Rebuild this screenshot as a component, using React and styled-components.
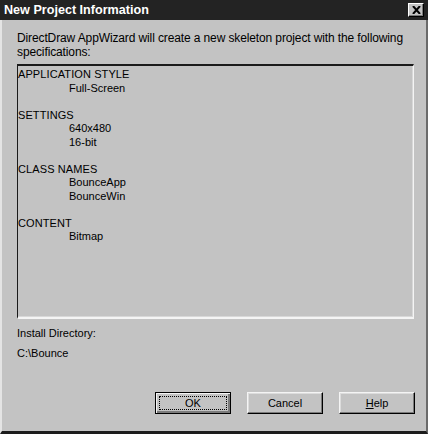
import React from 'react';
import styled, { createGlobalStyle } from 'styled-components';

const GlobalStyle = createGlobalStyle`
  html, body {
    margin: 0;
    padding: 0;
    background: #c3c3c3;
  }
  * {
    box-sizing: border-box;
  }
`;

const Window = styled.div`
  width: 428px;
  height: 434px;
  display: flex;
  flex-direction: column;
  background: #c3c3c3;
  border-left: 2px solid #e4e4e4;
  border-right: 2px solid #6a6a6a;
  border-bottom: 3px solid #1c1c1c;
  font-family: 'Liberation Sans', Arial, sans-serif;
  font-size: 11px;
  color: #000;
`;

const TitleBar = styled.div`
  height: 20px;
  flex: none;
  display: flex;
  align-items: center;
  justify-content: space-between;
  margin-left: -2px;
  margin-right: -2px;
  padding: 0 4px 0 4px;
  background: #232323;
  color: #fff;
  font-weight: bold;
  font-size: 12.6px;
`;

const CloseButton = styled.div`
  width: 16px;
  height: 14px;
  display: flex;
  align-items: center;
  justify-content: center;
  background: #c3c3c3;
  border: 1px solid;
  border-color: #fff #000 #000 #fff;
  box-shadow: inset -1px -1px 0 #7b7b7b;
`;

const Body = styled.div`
  flex: 1;
  display: flex;
  flex-direction: column;
  padding: 11px 11px 0 15px;
`;

const Intro = styled.p`
  margin: 0;
  font-size: 12px;
  line-height: 14px;
  letter-spacing: -0.12px;
`;

const SpecBox = styled.div`
  margin-top: 5px;
  height: 255px;
  margin-right: 1px;
  border-style: solid;
  border-width: 2px 1px 2px 1px;
  border-color: #1a1a1a #f4f4f4 #f4f4f4 #1a1a1a;
  box-shadow: inset -1px -1px 0 #d8d8d8;
  padding: 2px 0 0 0;
  line-height: 13.5px;
`;

const Group = styled.div`
  margin-bottom: 13.5px;
`;

const Heading = styled.div`
  letter-spacing: 0.1px;
`;

const Item = styled.div`
  padding-left: 51px;
`;

const Label = styled.div`
  margin-top: ${p => p.$top || 0}px;
  line-height: 14px;
`;

const ButtonRow = styled.div`
  display: flex;
  justify-content: flex-end;
  gap: 16px;
  margin-top: 32px;
`;

const Button = styled.button`
  width: 76px;
  height: 22px;
  padding: 0;
  font: inherit;
  color: #000;
  background: #c3c3c3;
  border: 1px solid;
  border-color: #f4f4f4 #000 #000 #f4f4f4;
  box-shadow: inset -1px -1px 0 #7b7b7b, inset 1px 1px 0 #dcdcdc;
  position: relative;
  ${p => p.$default && `
    border: 1px solid #000;
    box-shadow: inset 1px 1px 0 #f4f4f4, inset -2px -2px 0 #7b7b7b;
    &::after {
      content: '';
      position: absolute;
      inset: 3px;
      border: 1px dotted #000;
    }
  `}
  u {
    text-decoration: underline;
  }
`;

const specs = [
  { title: 'APPLICATION STYLE', items: ['Full-Screen'] },
  { title: 'SETTINGS', items: ['640x480', '16-bit'] },
  { title: 'CLASS NAMES', items: ['BounceApp', 'BounceWin'] },
  { title: 'CONTENT', items: ['Bitmap'] },
];

export default function App() {
  return (
    <>
      <GlobalStyle />
      <Window>
        <TitleBar>
          <span>New Project Information</span>
          <CloseButton>
            <svg width="9" height="8" viewBox="0 0 9 8">
              <path d="M1 0 L8 8 M8 0 L1 8" stroke="#000" strokeWidth="2" />
            </svg>
          </CloseButton>
        </TitleBar>
        <Body>
          <Intro>
            DirectDraw AppWizard will create a new skeleton project with the following
            specifications:
          </Intro>
          <SpecBox>
            {specs.map(g => (
              <Group key={g.title}>
                <Heading>{g.title}</Heading>
                {g.items.map(i => (
                  <Item key={i}>{i}</Item>
                ))}
              </Group>
            ))}
          </SpecBox>
          <Label $top={7}>Install Directory:</Label>
          <Label $top={6}>C:\Bounce</Label>
          <ButtonRow>
            <Button $default>OK</Button>
            <Button>Cancel</Button>
            <Button>
              <u>H</u>elp
            </Button>
          </ButtonRow>
        </Body>
      </Window>
    </>
  );
}
